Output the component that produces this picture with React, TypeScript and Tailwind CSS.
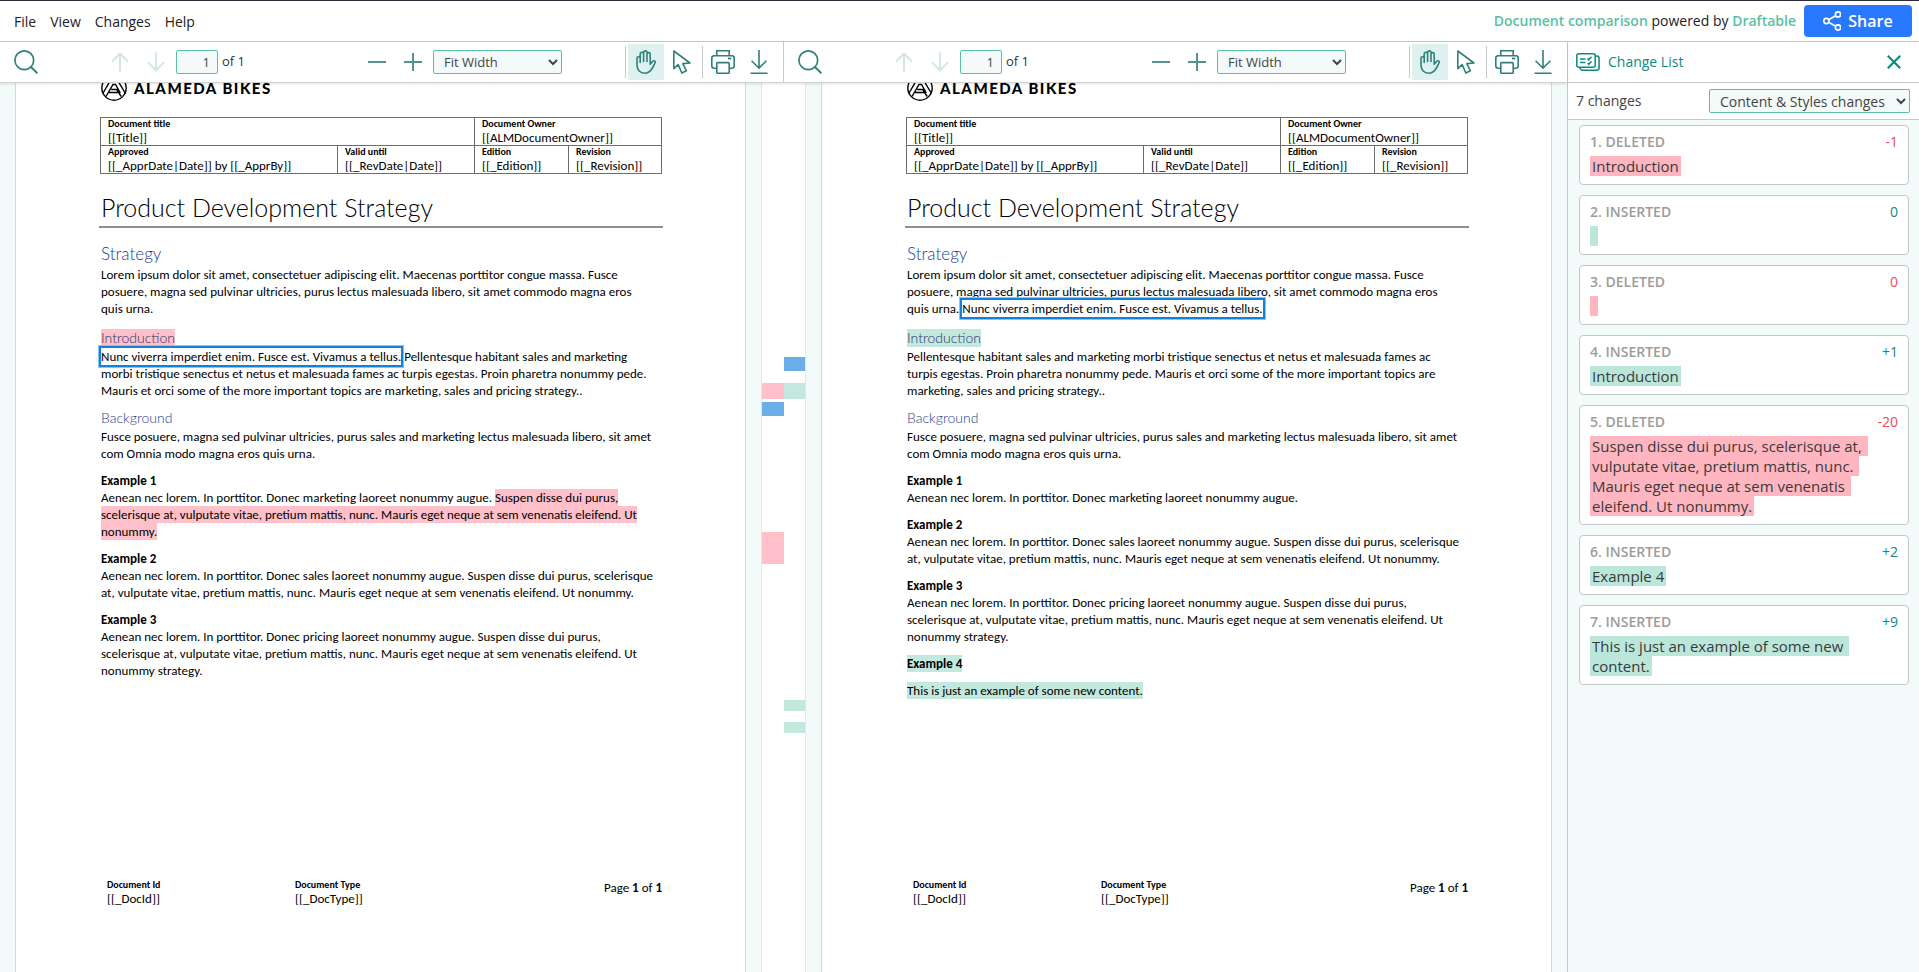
import React, { useId } from "react";

type Tone = "del" | "ins" | "move";
type Run = string | { t: string; tone: Tone };
type Block = { kind: "h1" | "h2" | "h3" | "p"; lines: Run[][] };

const toneClass: Record<Tone, string> = {
  del: "inline-block bg-[#ffc0c9] text-black",
  ins: "inline-block bg-[#c3e9de] text-black",
  move: "inline-block bg-transparent text-black outline-2 outline-[#1281dd] shadow-[0_0_0_3px_#8fc3ee]",
};

const strategyTop: Run[][] = [
  ["Lorem ipsum dolor sit amet, consectetuer adipiscing elit. Maecenas porttitor congue massa. Fusce"],
  ["posuere, magna sed pulvinar ultricies, purus lectus malesuada libero, sit amet commodo magna eros"],
];
const background: Block[] = [
  { kind: "h2", lines: [["Background"]] },
  {
    kind: "p",
    lines: [
      ["Fusce posuere, magna sed pulvinar ultricies, purus sales and marketing lectus malesuada libero, sit amet"],
      ["com Omnia modo magna eros quis urna."],
    ],
  },
];
const example2: Block[] = [
  { kind: "h3", lines: [["Example 2"]] },
  {
    kind: "p",
    lines: [
      ["Aenean nec lorem. In porttitor. Donec sales laoreet nonummy augue. Suspen disse dui purus, scelerisque"],
      ["at, vulputate vitae, pretium mattis, nunc. Mauris eget neque at sem venenatis eleifend. Ut nonummy."],
    ],
  },
];
const example3: Block[] = [
  { kind: "h3", lines: [["Example 3"]] },
  {
    kind: "p",
    lines: [
      ["Aenean nec lorem. In porttitor. Donec pricing laoreet nonummy augue. Suspen disse dui purus,"],
      ["scelerisque at, vulputate vitae, pretium mattis, nunc. Mauris eget neque at sem venenatis eleifend. Ut"],
      ["nonummy strategy."],
    ],
  },
];

const leftDoc: Block[] = [
  { kind: "h1", lines: [["Strategy"]] },
  { kind: "p", lines: [...strategyTop, ["quis urna."]] },
  { kind: "h2", lines: [[{ t: "Introduction", tone: "del" }]] },
  {
    kind: "p",
    lines: [
      [
        { t: "Nunc viverra imperdiet enim. Fusce est. Vivamus a tellus.", tone: "move" },
        " Pellentesque habitant sales and marketing",
      ],
      ["morbi tristique senectus et netus et malesuada fames ac turpis egestas. Proin pharetra nonummy pede."],
      ["Mauris et orci some of the more important topics are marketing, sales and pricing strategy.."],
    ],
  },
  ...background,
  { kind: "h3", lines: [["Example 1"]] },
  {
    kind: "p",
    lines: [
      [
        "Aenean nec lorem. In porttitor. Donec marketing laoreet nonummy augue. ",
        { t: "Suspen disse dui purus,", tone: "del" },
      ],
      [
        {
          t: "scelerisque at, vulputate vitae, pretium mattis, nunc. Mauris eget neque at sem venenatis eleifend. Ut",
          tone: "del",
        },
      ],
      [{ t: "nonummy.", tone: "del" }],
    ],
  },
  ...example2,
  ...example3,
];

const rightDoc: Block[] = [
  { kind: "h1", lines: [["Strategy"]] },
  {
    kind: "p",
    lines: [
      ...strategyTop,
      ["quis urna. ", { t: "Nunc viverra imperdiet enim. Fusce est. Vivamus a tellus.", tone: "move" }],
    ],
  },
  { kind: "h2", lines: [[{ t: "Introduction", tone: "ins" }]] },
  {
    kind: "p",
    lines: [
      ["Pellentesque habitant sales and marketing morbi tristique senectus et netus et malesuada fames ac"],
      ["turpis egestas. Proin pharetra nonummy pede. Mauris et orci some of the more important topics are"],
      ["marketing, sales and pricing strategy.."],
    ],
  },
  ...background,
  { kind: "h3", lines: [["Example 1"]] },
  { kind: "p", lines: [["Aenean nec lorem. In porttitor. Donec marketing laoreet nonummy augue."]] },
  ...example2,
  ...example3,
  { kind: "h3", lines: [[{ t: "Example 4", tone: "ins" }]] },
  { kind: "h3", lines: [] },
  { kind: "p", lines: [[{ t: "This is just an example of some new content.", tone: "ins" }]] },
];

const changes = [
  { type: "DELETED", delta: "-1", text: "Introduction" },
  { type: "INSERTED", delta: "0", text: "" },
  { type: "DELETED", delta: "0", text: "" },
  { type: "INSERTED", delta: "+1", text: "Introduction" },
  {
    type: "DELETED",
    delta: "-20",
    text: "Suspen disse dui purus, scelerisque at, vulputate vitae, pretium mattis, nunc. Mauris eget neque at sem venenatis eleifend. Ut nonummy.",
  },
  { type: "INSERTED", delta: "+2", text: "Example 4" },
  { type: "INSERTED", delta: "+9", text: "This is just an example of some new content." },
];

function Svg({ w, h, className = "", sw = 1.5, children }: { w: number; h: number; className?: string; sw?: number; children: React.ReactNode }) {
  return (
    <svg width={w} height={h} viewBox={`0 0 ${w} ${h}`} fill="none" stroke="currentColor" strokeWidth={sw} className={className} aria-hidden="true">
      {children}
    </svg>
  );
}

function Toolbar({ side }: { side: string }) {
  const id = useId();
  return (
    <div className="flex h-10 min-w-0 flex-1 items-center pl-3.5 pr-[15px] text-[#2e8078]">
      <button aria-label={`Search ${side} document`}>
        <Svg w={24} h={24} sw={1.7}>
          <circle cx="10.3" cy="10.3" r="9.4" />
          <path d="M17 17l6.4 6.2" strokeWidth="2" />
        </Svg>
      </button>
      <div className="ml-[73px] flex items-center gap-[18px] text-[#d0e5e2]">
        <button aria-label="Previous page">
          <Svg w={18} h={20} sw={1.8}>
            <path d="M9 19.500V1.500M.8 9.800L9 1.500l8.200 8.300" />
          </Svg>
        </button>
        <button aria-label="Next page">
          <Svg w={18} h={20} sw={1.8}>
            <path d="M9 .5v18M.8 10.200L9 18.500l8.200-8.300" />
          </Svg>
        </button>
      </div>
      <input
        id={id}
        aria-label="Page number"
        defaultValue="1"
        className="ml-[11px] h-6 w-[42px] rounded-xs border border-[#5bbfa3] bg-[#f4fafa] pr-[7px] text-right text-[13px] text-[#444]"
      />
      <label htmlFor={id} className="ml-1 w-[22px] text-[13px] whitespace-nowrap text-[#333]">
        of 1
      </label>
      <div className="ml-[124px] flex items-center gap-[18px] text-[#4f9690]">
        <button aria-label="Zoom out">
          <Svg w={18} h={18}>
            <path d="M0 9h18" strokeWidth="2" />
          </Svg>
        </button>
        <button aria-label="Zoom in">
          <Svg w={18} h={18}>
            <path d="M0 9h18M9 0v18" strokeWidth="2" />
          </Svg>
        </button>
      </div>
      <select aria-label="Zoom level" className="ml-[11px] h-6 w-[129px] rounded-xs border border-[#5bbfa3] bg-[#f4fafa] pl-[6px] text-[13px] text-[#444]">
        <option>Fit Width</option>
      </select>
      <div className="ml-auto flex items-center">
        <span className="h-8 w-px bg-[#c8c8c8]" />
        <button aria-label="Pan" className="ml-0.5 flex size-9 items-center justify-center bg-[#dff1ee]">
          <Svg w={20} h={24} sw={1.6}>
            <path d="M1 15V8.300a1.600 1.600 0 0 1 3.200 0V12.500M4.200 8.500V3.900a1.700 1.700 0 0 1 3.400 0V11.500M7.600 4.200V2.600a1.700 1.700 0 0 1 3.400 0V11.500M11 4.200a1.600 1.600 0 0 1 3.200 0V14.200l2.300-2.800c1.200-1.400 3.500-.4 2.600 1.300-1 2-2 4.600-3.600 6.700-1.900 2.500-4 3.800-6.700 3.800C4 23.200 1 20 1 15" strokeLinecap="round" strokeLinejoin="round" />
          </Svg>
        </button>
        <button aria-label="Select" className="ml-[9px]">
          <Svg w={18} h={24} sw={1.6}>
            <path d="M.8 1v17.600l4.400-4 3.600 8.400 4.600-2.200-3.600-7.200 7.200-.6z" strokeLinejoin="round" />
          </Svg>
        </button>
        <span className="ml-[11px] h-8 w-px bg-[#c8c8c8]" />
        <button aria-label="Print" className="ml-2">
          <Svg w={24} h={24} sw={1.6}>
            <path d="M5.800 5.800V.8h12.400v5" />
            <rect x=".8" y="5.800" width="22.400" height="12.400" rx="2.400" />
            <rect x="5.800" y="12.600" width="12.400" height="10.600" rx=".8" fill="white" />
            <path d="M17 8.500h3.200" strokeWidth="1.800" />
          </Svg>
        </button>
        <button aria-label="Download" className="ml-[15px]">
          <Svg w={18} h={24} sw={1.6}>
            <path d="M9 0v18M1.600 10.800L9 18.200l7.400-7.400M.5 23.200h17" />
          </Svg>
        </button>
      </div>
    </div>
  );
}

function Field({ label, value }: { label: string; value: string }) {
  return (
    <div>
      <div className="text-[10px]/3 font-bold">{label}</div>
      <div className="text-[13px]/[15px]">{value}</div>
    </div>
  );
}

const blockClass = {
  h1: "font-[Lato,sans-serif] text-[17px]/6 font-light text-[#1b4192]",
  h2: "font-[Lato,sans-serif] text-[14px]/5 font-light text-[#1b4192]",
  h3: "mt-2.5 text-[13px]/[17px] font-bold",
  p: "text-[13px]/[17px]",
};

function BlockView({ block }: { block: Block }) {
  const body = block.lines.map((line, i) => (
    <span key={i} className="block whitespace-pre">
      {line.map((run, j) =>
        typeof run === "string" ? (
          run
        ) : (
          <mark key={j} className={toneClass[run.tone] + (block.kind === "h2" ? " leading-[18px] !text-[#24346a]" : "")}>
            {run.t}
          </mark>
        ),
      )}
    </span>
  ));
  if (block.kind === "h1") return <h2 className={blockClass.h1}>{body}</h2>;
  if (block.kind === "h2") return <h3 className={blockClass.h2}>{body}</h3>;
  if (block.kind === "h3") return block.lines.length ? <h4 className={blockClass.h3}>{body}</h4> : <div className="h-2.5" />;
  return <p className={blockClass.p}>{body}</p>;
}

function DocumentPage({ blocks }: { blocks: Block[] }) {
  const cell = "border border-[#6d6d6d] pl-[7px] text-left align-top";
  return (
    <section className="min-w-0 flex-1 overflow-hidden px-[15px]">
      <article className="min-h-[1000px] overflow-hidden border-x border-[#d3dadb] bg-white pl-[84px] pr-[83px] font-[Carlito,Open_Sans,sans-serif] text-black">
        <div className="-mt-[9px] flex h-[27px] items-center gap-[7px] pl-px">
          <Svg w={26} h={26} sw={1.4}>
            <circle cx="13" cy="13" r="12.200" />
            <path d="M1.800 18.500L10.500 3.500h5L24.500 18.500M5 21.500L12 9.500h2.500l4.800 8.500M8 17.500h9.500M10.200 14.500h5.500l4.500 7" />
          </Svg>
          <span className="font-[Lato,sans-serif] text-[15px]/4 font-black tracking-widest">ALAMEDA BIKES</span>
        </div>
        <table className="mt-4 w-full table-fixed border-collapse">
          <colgroup>
            <col className="w-[237px]" />
            <col className="w-[137px]" />
            <col className="w-[94px]" />
            <col />
          </colgroup>
          <tbody>
            <tr>
              <td colSpan={2} className={cell}><Field label="Document title" value="[[Title]]" /></td>
              <td colSpan={2} className={cell}><Field label="Document Owner" value="[[ALMDocumentOwner]]" /></td>
            </tr>
            <tr>
              <td className={cell}><Field label="Approved" value="[[_ApprDate|Date]] by [[_ApprBy]]" /></td>
              <td className={cell}><Field label="Valid until" value="[[_RevDate|Date]]" /></td>
              <td className={cell}><Field label="Edition" value="[[_Edition]]" /></td>
              <td className={cell}><Field label="Revision" value="[[_Revision]]" /></td>
            </tr>
          </tbody>
        </table>
        <h1 className="-mx-px mt-4 border-b-2 border-[#8f8f8f] px-0.5 pb-0.5 font-[Lato,sans-serif] text-[25px]/[34px] font-light">
          Product Development Strategy
        </h1>
        <div className="flex min-h-[651px] flex-col pl-px pt-3.5">
          {blocks.map((b, i) => (
            <div key={i} className={b.kind === "h2" ? (b.lines[0][0] === "Background" ? "mt-[9px]" : "mt-[11px]") : ""}>
              <BlockView block={b} />
            </div>
          ))}
        </div>
        <footer className="grid grid-cols-[188px_1fr_1fr] pl-[7px]">
          <Field label="Document Id" value="[[_DocId]]" />
          <Field label="Document Type" value="[[_DocType]]" />
          <p className="text-right text-[13px]/[17px]">
            Page <b>1</b> of <b>1</b>
          </p>
        </footer>
      </article>
    </section>
  );
}

export default function App() {
  return (
    <div className="flex h-screen flex-col overflow-hidden border-t border-[#2b2d38] bg-[#f3fafa] font-[Open_Sans,sans-serif] text-[#222]">
      <header className="flex h-[41px] shrink-0 items-center justify-between border-b border-[#c8c8c8] bg-white pl-3.5 pr-[7px]">
        <nav className="flex gap-3.5 pt-0.5 text-sm">
          <button>File</button>
          <button>View</button>
          <button>Changes</button>
          <button>Help</button>
        </nav>
        <div className="flex items-center gap-2">
          <p className="text-sm font-semibold">
            <a href="#comparison" className="text-[#5bbfa3]">Document comparison</a>{" "}
            <span className="font-medium">powered by</span>{" "}
            <a href="#draftable" className="text-[#5bbfa3]">Draftable</a>
          </p>
          <button className="flex h-8 w-[108px] items-center justify-center gap-[7px] rounded-sm bg-[#2979ff] text-base font-semibold text-white">
            <Svg w={18} h={20} sw={1.6}>
              <circle cx="15" cy="3.500" r="2.600" />
              <circle cx="3.400" cy="10" r="2.600" />
              <circle cx="15" cy="16.500" r="2.600" />
              <path d="M5.700 8.700l7-3.900M5.700 11.300l7 3.900" />
            </Svg>
            Share
          </button>
        </div>
      </header>

      <div className="flex min-h-0 flex-1">
        <main className="flex min-w-0 flex-1 flex-col">
          <div className="z-10 flex shrink-0 border-b border-[#d2d2d2] bg-white shadow-[0_1px_3px_rgba(0,0,0,0.12)]">
            <Toolbar side="left" />
            <span className="w-px bg-[#c8c8c8]" />
            <Toolbar side="right" />
          </div>
          <div className="flex min-h-0 flex-1">
            <DocumentPage blocks={leftDoc} />
            <div className="relative w-[45px] border-x border-[#e2e8e8] bg-white">
              <span className="absolute left-1/2 top-[274px] h-3.5 w-1/2 bg-[#6cafe8]" />
              <span className="absolute left-0 top-[300px] h-4 w-1/2 bg-[#ffc0c9]" />
              <span className="absolute left-1/2 top-[300px] h-4 w-1/2 bg-[#c3e9de]" />
              <span className="absolute left-0 top-[319px] h-3.5 w-1/2 bg-[#6cafe8]" />
              <span className="absolute left-0 top-[449px] h-8 w-1/2 bg-[#ffc0c9]" />
              <span className="absolute left-1/2 top-[617px] h-[11px] w-1/2 bg-[#c3e9de]" />
              <span className="absolute left-1/2 top-[639px] h-[11px] w-1/2 bg-[#c3e9de]" />
            </div>
            <DocumentPage blocks={rightDoc} />
          </div>
        </main>

        <aside className="flex w-[352px] shrink-0 flex-col border-l border-[#c8c8c8]">
          <div className="flex h-[41px] items-center border-b border-[#c8c8c8] bg-white pl-2 pr-[18px] text-[#0f8a7c]">
            <Svg w={24} h={18} sw={1.5}>
              <rect x=".8" y=".8" width="18.400" height="13.400" rx="2" />
              <path d="M19.500 3h1.200a2.400 2.400 0 0 1 2.400 2.400v9.400a2.400 2.400 0 0 1-2.400 2.400H6.500c-1.400 0-2.300-.8-2.600-2.500M4 6h5.500M4 9.500h5.500M11.500 5.500l1.300 1.300 2.700-3M11.500 10l1.300 1.300 2.700-3" />
            </Svg>
            <h2 className="ml-2 text-sm font-medium">Change List</h2>
            <button aria-label="Close change list" className="ml-auto">
              <Svg w={14} h={14} sw={2.2}>
                <path d="M.8.8l12.400 12.400M13.200.8L.8 13.200" />
              </Svg>
            </button>
          </div>
          <div className="flex h-[37px] items-center justify-between border-b border-[#c8c8c8] bg-white pl-2 pr-[9px] text-[#444]">
            <label htmlFor="filter" className="text-sm">7 changes</label>
            <select id="filter" className="h-6 w-[201px] rounded-xs border border-[#5bbfa3] bg-[#f4fafa] pl-[6px] text-sm">
              <option>Content &amp; Styles changes</option>
            </select>
          </div>
          <ul className="flex flex-col gap-2.5 py-[5px] pl-[11px] pr-2.5">
            {changes.map((c, i) => {
              const del = c.type === "DELETED";
              return (
                <li key={i} className="rounded border border-[#c3c8c8] bg-white px-2.5 pb-2 pt-1">
                  <div className="mb-0.5 flex h-6 items-center justify-between text-sm">
                    <span className="font-semibold text-[#9c9c9c]">{i + 1}. {c.type}</span>
                    <span className={del ? "text-[#ea4a62]" : "text-[#0f8a7c]"}>{c.delta}</span>
                  </div>
                  <p className="text-[15px]/5 whitespace-pre-wrap">
                    <mark className={"box-decoration-clone px-0.5 text-[#3a3a3a] " + (del ? "bg-[#ffb6c1]" : "bg-[#bbe6da]")}>
                      {c.text || " "}
                    </mark>
                  </p>
                </li>
              );
            })}
          </ul>
        </aside>
      </div>
    </div>
  );
}
